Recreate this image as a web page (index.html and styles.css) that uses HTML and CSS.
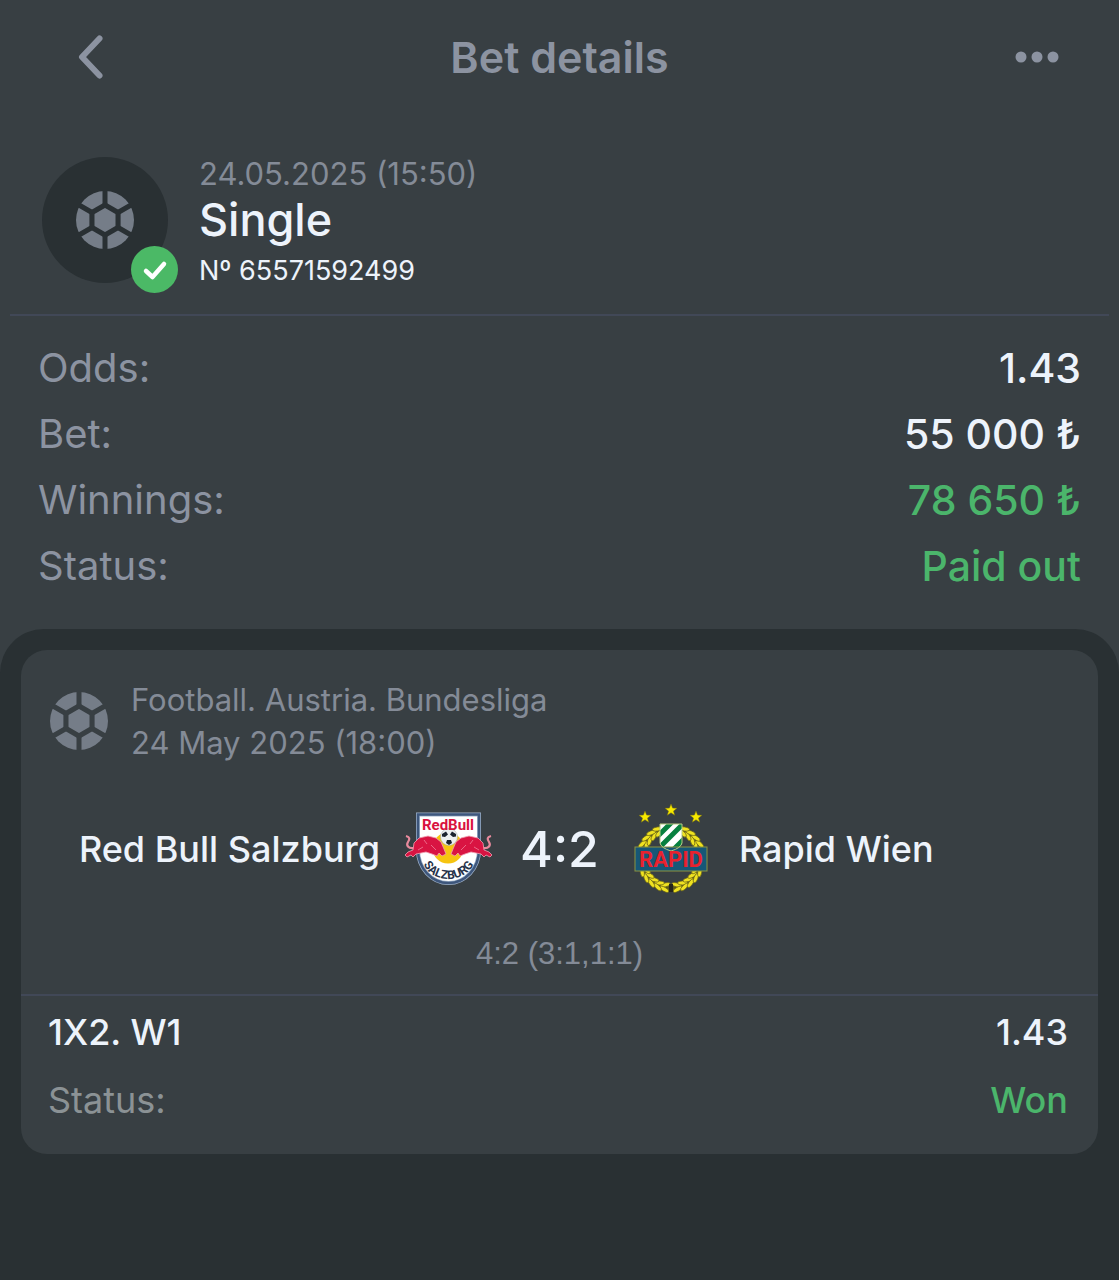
FILE: index.html
```html
<!DOCTYPE html>
<html lang="en">
<head>
<meta charset="utf-8">
<meta name="viewport" content="width=device-width, initial-scale=1">
<title>Bet details</title>
<link rel="stylesheet" href="styles.css">
</head>
<body>
<svg width="0" height="0" class="defs" aria-hidden="true">
  <defs>
    <mask id="ball-seams" maskUnits="userSpaceOnUse" x="0" y="0" width="60" height="60">
      <circle cx="30" cy="30" r="29" fill="#fff"/>
      <path d="M30 0V60M4 15L56 45M4 45L56 15" stroke="#000" stroke-width="5"/>
      <path d="M30 12L45.600 21V39L30 48L14.400 39V21Z" fill="#000"/>
      <path d="M30 19L39.500 24.500V35.500L30 41L20.500 35.500V24.500Z" fill="#fff" stroke="#fff" stroke-width="2" stroke-linejoin="round"/>
    </mask>
    <symbol id="ball" viewBox="0 0 60 60">
      <rect width="60" height="60" fill="currentColor" mask="url(#ball-seams)"/>
    </symbol>
  </defs>
</svg>

<header class="topbar">
  <button class="icon-button" type="button" aria-label="Back">
    <svg width="28" height="46" viewBox="0 0 28 46"><path d="M23.500 4.500L6 23L23.500 41.500" fill="none" stroke="currentColor" stroke-width="6" stroke-linecap="round" stroke-linejoin="round"/></svg>
  </button>
  <h1 class="title">Bet details</h1>
  <button class="icon-button more" type="button" aria-label="More options">
    <svg width="44" height="12" viewBox="0 0 44 12" fill="currentColor"><circle cx="6" cy="6" r="5.500"/><circle cx="22" cy="6" r="5.500"/><circle cx="38" cy="6" r="5.500"/></svg>
  </button>
</header>

<main class="page">
  <section class="bet">
    <div class="avatar">
      <svg class="ball" width="60" height="60"><use href="#ball"/></svg>
      <span class="badge">
        <svg width="47" height="47" viewBox="0 0 47 47"><path d="M15 25L21.500 31L33 18" fill="none" stroke="#fff" stroke-width="4.500" stroke-linecap="round" stroke-linejoin="round"/></svg>
      </span>
    </div>
    <div class="bet-text">
      <p class="bet-date">24.05.2025 (15:50)</p>
      <h2 class="bet-type">Single</h2>
      <p class="bet-number">Nº 65571592499</p>
    </div>
  </section>

  <dl class="summary">
    <div class="row"><dt>Odds:</dt><dd>1.43</dd></div>
    <div class="row"><dt>Bet:</dt><dd>55 000 ₺</dd></div>
    <div class="row"><dt>Winnings:</dt><dd class="win">78 650 ₺</dd></div>
    <div class="row"><dt>Status:</dt><dd class="win">Paid out</dd></div>
  </dl>

  <section class="events">
    <article class="card">
      <div class="league">
        <svg class="ball" width="60" height="60"><use href="#ball"/></svg>
        <div>
          <p>Football. Austria. Bundesliga</p>
          <p>24 May 2025 (18:00)</p>
        </div>
      </div>

      <div class="match">
        <div class="team home">
          <span>Red Bull Salzburg</span>
          <svg width="88" height="74" viewBox="0 0 88 74" role="img" aria-label="Red Bull Salzburg">
            <path d="M14 2.500H75V38A30.500 33 0 0 1 14 38Z" fill="#fff" stroke="#9db0c8" stroke-width="4"/>
            <path d="M14 2.500H75V38A30.500 33 0 0 1 14 38Z" fill="none" stroke="#3d567c" stroke-width="2.500"/>
            <circle cx="44" cy="36" r="15.500" fill="#f6c410"/>
            <circle cx="45" cy="25" r="8.500" fill="#eceff0" stroke="#9aa3a6" stroke-width="0.500"/>
            <path d="M38 22l4-2.500 2 3-3 2.500-3-.5zM52 22l-4-2.500-2 3 3 2.500 3-.5zM43 28h4l1 3-3 2-3-2z" fill="#1b2330"/>
            <g id="bull">
              <path d="M10 36C4 37 2 33 4 30C6 27 6 25 2 24" fill="none" stroke="#e88a9d" stroke-width="2.200"/>
              <path d="M1 43L4 40L9 38L10 31L15 26L24 24L32 26L37 30L40 37L42 42L38 44L35 41L33 44L28 42L22 40L17 41L12 42L9 45L7 43L3 45Z" fill="#d91442" stroke="#f0a0b2" stroke-width="0.800" stroke-linejoin="round"/>
              <path d="M14 38l5-3M27 33l5 5M20 28l3 4" stroke="#f0809a" stroke-width="0.800"/>
            </g>
            <use href="#bull" transform="matrix(-1 0 0 1 89 0)"/>
            <text x="44" y="18" text-anchor="middle" class="crest-bull">RedBull</text>
            <path id="crest-arc" d="M17 46C24 74 65 74 72 46" fill="none"/>
            <text class="crest-city" text-anchor="middle"><textPath href="#crest-arc" startOffset="50%">SALZBURG</textPath></text>
          </svg>
        </div>
        <strong class="score">4:2</strong>
        <div class="team away">
          <svg width="88" height="90" viewBox="-7 0 88 90" role="img" aria-label="Rapid Wien">
            <defs>
              <path id="star" d="M0-6L1.600-1.900L6-1.700L2.500 1.100L3.700 5.300L0 2.800L-3.700 5.300L-2.500 1.100L-6-1.700L-1.600-1.900Z"/>
              <clipPath id="shield"><path d="M26 20H48V39Q47 44 37 47Q27 44 26 39Z"/></clipPath>
              <g id="leaf">
                <ellipse cx="37" cy="81.500" rx="5" ry="2" transform="rotate(-24 37 81.500)"/>
                <ellipse cx="37" cy="86" rx="5" ry="2" transform="rotate(18 37 86)"/>
              </g>
              <g id="branch">
                <use href="#leaf" transform="rotate(12 37 54)"/>
                <use href="#leaf" transform="rotate(25 37 54)"/>
                <use href="#leaf" transform="rotate(38 37 54)"/>
                <use href="#leaf" transform="rotate(51 37 54)"/>
                <use href="#leaf" transform="rotate(64 37 54)"/>
                <use href="#leaf" transform="rotate(116 37 54)"/>
                <use href="#leaf" transform="rotate(129 37 54)"/>
                <use href="#leaf" transform="rotate(142 37 54)"/>
                <use href="#leaf" transform="rotate(155 37 54)"/>
              </g>
            </defs>
            <g fill="#f7e900" stroke="#766e12" stroke-width="0.500"><use href="#star" x="11" y="13"/><use href="#star" x="37" y="6"/><use href="#star" x="62" y="13"/></g>
            <circle cx="37" cy="54" r="30" fill="none" stroke="#5c5818" stroke-width="6"/>
            <g fill="#efe221" stroke="#6a6416" stroke-width="0.700">
              <use href="#branch"/>
              <use href="#branch" transform="matrix(-1 0 0 1 74 0)"/>
            </g>
            <path d="M26 20H48V39Q47 44 37 47Q27 44 26 39Z" fill="#fff"/>
            <path clip-path="url(#shield)" d="M22 34L40 16M24 45L51 18M34 51L51 34" stroke="#07803f" stroke-width="5"/>
            <rect x="1" y="43" width="72" height="24" fill="#165777" stroke="#8b9441"/>
            <path d="M26 20H48V39Q47 44 37 47Q27 44 26 39Z" fill="none" stroke="#b7cc82"/>
            <text x="37" y="63" text-anchor="middle" class="crest-rapid">RAPID</text>
            <path d="M35 80h4v8h-4z" fill="#25251d"/>
          </svg>
          <span>Rapid Wien</span>
        </div>
      </div>

      <p class="periods">4:2 (3:1,1:1)</p>

      <dl class="market">
        <div class="row"><dt class="pick">1X2. W1</dt><dd>1.43</dd></div>
        <div class="row"><dt class="status">Status:</dt><dd class="win">Won</dd></div>
      </dl>
    </article>
  </section>
</main>
</body>
</html>
```
FILE: styles.css
```css
* { box-sizing: border-box; margin: 0; }

body {
  min-height: 100vh;
  display: flex;
  flex-direction: column;
  background: #383f43;
  color: #edf3fb;
  font-family: Inter, "Noto Sans", sans-serif;
}

.defs { position: absolute; }
svg { display: block; flex: none; }

.topbar {
  display: grid;
  grid-template-columns: 1fr auto 1fr;
  align-items: center;
  height: 114px;
  padding: 0 60px 0 60px;
  color: #8c93a1;
}

.icon-button {
  display: flex;
  align-items: center;
  justify-self: start;
  height: 48px;
  padding: 0 16px;
  border: 0;
  background: none;
  color: inherit;
}

.more { justify-self: end; padding: 0; }

.title { font-size: 43px; line-height: 56px; font-weight: 600; }

.page { flex: 1; display: flex; flex-direction: column; }

.bet {
  display: flex;
  gap: 31px;
  margin: 0 10px;
  padding: 43px 32px 21px;
  border-bottom: 2px solid #414857;
}

.avatar {
  position: relative;
  display: grid;
  place-items: center;
  width: 126px;
  height: 126px;
  border-radius: 50%;
  background: #293033;
}

.ball { color: #757d88; }

.badge {
  position: absolute;
  right: -10px;
  bottom: -10px;
  border-radius: 50%;
  background: #4bb966;
}

.bet-date { font-size: 31px; line-height: 34px; color: #848b97; }
.bet-type { font-size: 45px; line-height: 58px; font-weight: 500; }
.bet-number { font-size: 27px; line-height: 44px; }

.summary {
  padding: 19px 38px 30px;
  font-size: 41px;
  line-height: 66px;
}

.row { display: flex; justify-content: space-between; }
.row dt { color: #8c93a1; }
.row dd { font-weight: 500; }
.summary dt { font-size: 40px; }
.row .pick { color: inherit; font-weight: 500; }
.row .status { color: #8b9295; }
.row .win { color: #4bb56b; }

.events {
  flex: 1;
  padding: 21px;
  border-radius: 44px 44px 0 0;
  background: #293033;
}

.card { border-radius: 26px; background: #383f43; }

.league {
  display: flex;
  align-items: center;
  gap: 22px;
  padding: 28px 28px 0;
  font-size: 31px;
  line-height: 43px;
  color: #848b97;
}

.match {
  display: grid;
  grid-template-columns: 1fr auto 1fr;
  align-items: center;
  gap: 28px;
  padding: 36px 28px 0;
}

.team {
  display: flex;
  align-items: center;
  gap: 24px;
  font-size: 36px;
  line-height: 48px;
  font-weight: 500;
}

.home { justify-content: flex-end; }
.score { font-size: 50px; line-height: 98px; font-weight: 500; }

.periods {
  padding: 36px 0 20px;
  font-family: "Liberation Sans", Arial, sans-serif;
  font-size: 31px;
  line-height: 40px;
  text-align: center;
  color: #848b97;
}

.market {
  padding: 2px 30px 20px 27px;
  border-top: 2px solid #414857;
  font-size: 36px;
  line-height: 68px;
}

.crest-bull { font: 700 15px Roboto, sans-serif; fill: #d9123f; }
.crest-city { font: 700 12px Roboto, sans-serif; fill: #27334a; }
.crest-rapid { font: 700 22px Roboto, sans-serif; fill: #e8222e; }
```
